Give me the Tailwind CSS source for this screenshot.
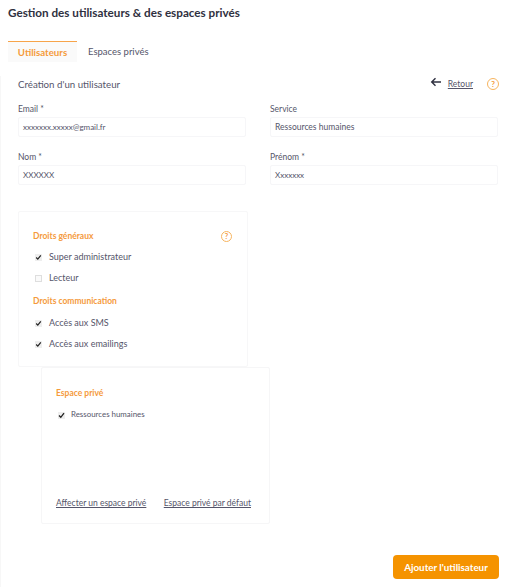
<!DOCTYPE html>
<html lang="fr"><head><meta charset="utf-8"><script src="https://cdn.jsdelivr.net/npm/@tailwindcss/browser@4"></script></head>
<body class="bg-white">
<div class="w-[510px] h-[587px] overflow-hidden bg-white text-[#55556a] font-['Lato',sans-serif] relative">
  <h1 class="pl-[8px] pt-[3px] h-[41px] text-[11.7px] leading-[18px] font-bold text-[#2f3040]">Gestion des utilisateurs &amp; des espaces privés</h1>
  <div class="flex h-[21px] pl-[8px]">
    <div class="w-[69px] bg-[#fafafa] border-t border-[#f7a44a] text-[9.7px] leading-[20px] font-bold text-[#f59a3c] text-center">Utilisateurs</div>
    <div class="pl-[11px] text-[9.5px] leading-[21px] text-[#55556a]">Espaces privés</div>
  </div>
  <div class="border-l border-[#f7f7f7] h-[525px] pl-[17px] pr-[11px]">
    <div class="flex items-center h-[16px] mt-[14px] mb-[10px] text-[9.7px] text-[#55556a]">
      <span>Création d'un utilisateur</span>
      <svg class="ml-auto w-[12px] h-[12px] -mt-[4px]" viewBox="0 0 12 12" fill="none" stroke="#2f3040" stroke-width="1.4"><path d="M11 6H2M5.5 2.2 1.7 6l3.8 3.8"/></svg>
      <span class="ml-[6px] text-[8.5px] underline">Retour</span>
      <span class="ml-[14px] w-[12px] h-[12px] rounded-full border border-[#f7b45e] text-[#f59a3c] text-[8px] leading-[10px] font-bold text-center">?</span>
    </div>
    <div class="grid grid-cols-[228px_228px] gap-x-[24px] gap-y-[13px] text-[8.5px]">
      <div><div class="h-[14px] leading-[14px]">Email *</div><div class="h-[20px] mt-[1px] border border-[#f6f6f8] rounded-[2px] pl-[4px] leading-[19px] text-[8px]">xxxxxxx.xxxxx@gmail.fr</div></div>
      <div><div class="h-[14px] leading-[14px]">Service</div><div class="h-[20px] mt-[1px] border border-[#f6f6f8] rounded-[2px] pl-[4px] leading-[19px]">Ressources humaines</div></div>
      <div><div class="h-[14px] leading-[14px]">Nom *</div><div class="h-[20px] mt-[1px] border border-[#f6f6f8] rounded-[2px] pl-[4px] leading-[19px] text-[8px]">XXXXXX</div></div>
      <div><div class="h-[14px] leading-[14px]">Prénom *</div><div class="h-[20px] mt-[1px] border border-[#f6f6f8] rounded-[2px] pl-[4px] leading-[19px] text-[8px]">Xxxxxxx</div></div>
    </div>
    <div class="w-[230px] h-[156px] mt-[26px] border border-[#f7f7f8] rounded-[2px] px-[14px] pt-[17px] text-[9px]">
      <div class="flex items-center justify-between h-[14px] pr-[1px] text-[8.5px] font-bold text-[#f59a3c]"><span>Droits généraux</span><span class="w-[11px] h-[11px] rounded-full border border-[#f7b45e] text-[7.5px] leading-[9px] font-bold text-center">?</span></div>
      <div class="flex items-center h-[20px] mt-[4px] pl-[2px] gap-[7px]"><svg class="w-[7px] h-[7px] bg-[#eeeeee]" viewBox="0 0 7 7" fill="none" stroke="#222" stroke-width="1.2"><path d="M1.2 3.5l1.6 1.7L5.8 1.4"/></svg><span>Super administrateur</span></div>
      <div class="flex items-center h-[20px] mt-[1px] pl-[2px] gap-[7px]"><span class="w-[7px] h-[7px] border border-[#dedede] bg-[#fafafa]"></span><span>Lecteur</span></div>
      <div class="h-[14px] leading-[14px] mt-[6px] text-[8.5px] font-bold text-[#f59a3c]">Droits communication</div>
      <div class="flex items-center h-[20px] mt-[5px] pl-[2px] gap-[7px]"><svg class="w-[7px] h-[7px] bg-[#eeeeee]" viewBox="0 0 7 7" fill="none" stroke="#222" stroke-width="1.2"><path d="M1.2 3.5l1.6 1.7L5.8 1.4"/></svg><span>Accès aux SMS</span></div>
      <div class="flex items-center h-[20px] mt-[1px] pl-[2px] gap-[7px]"><svg class="w-[7px] h-[7px] bg-[#eeeeee]" viewBox="0 0 7 7" fill="none" stroke="#222" stroke-width="1.2"><path d="M1.2 3.5l1.6 1.7L5.8 1.4"/></svg><span>Accès aux emailings</span></div>
    </div>
    <div class="w-[229px] h-[157px] ml-[23px] border border-[#f6f6f7] rounded-[2px] pl-[14px] pr-[18px] pt-[18px] flex flex-col text-[7.9px]">
      <div class="h-[14px] leading-[14px] text-[8.5px] font-bold text-[#f59a3c]">Espace privé</div>
      <div class="flex items-center h-[14px] mt-[8px] pl-[2px] gap-[6px]"><svg class="w-[7px] h-[7px] bg-[#eeeeee]" viewBox="0 0 7 7" fill="none" stroke="#222" stroke-width="1.3"><path d="M1 3.5l1.8 1.8L6 1.2"/></svg><span>Ressources humaines</span></div>
      <div class="mt-auto mb-[13px] flex justify-between text-[8.5px] underline"><span>Affecter un espace privé</span><span>Espace privé par défaut</span></div>
    </div>
  </div>
  <div class="absolute left-[393px] top-[555px] w-[106px] h-[24px] rounded-[4px] bg-[#f59300] text-white text-[9.8px] leading-[24px] font-bold text-center">Ajouter l'utilisateur</div>
</div>
</body></html>
